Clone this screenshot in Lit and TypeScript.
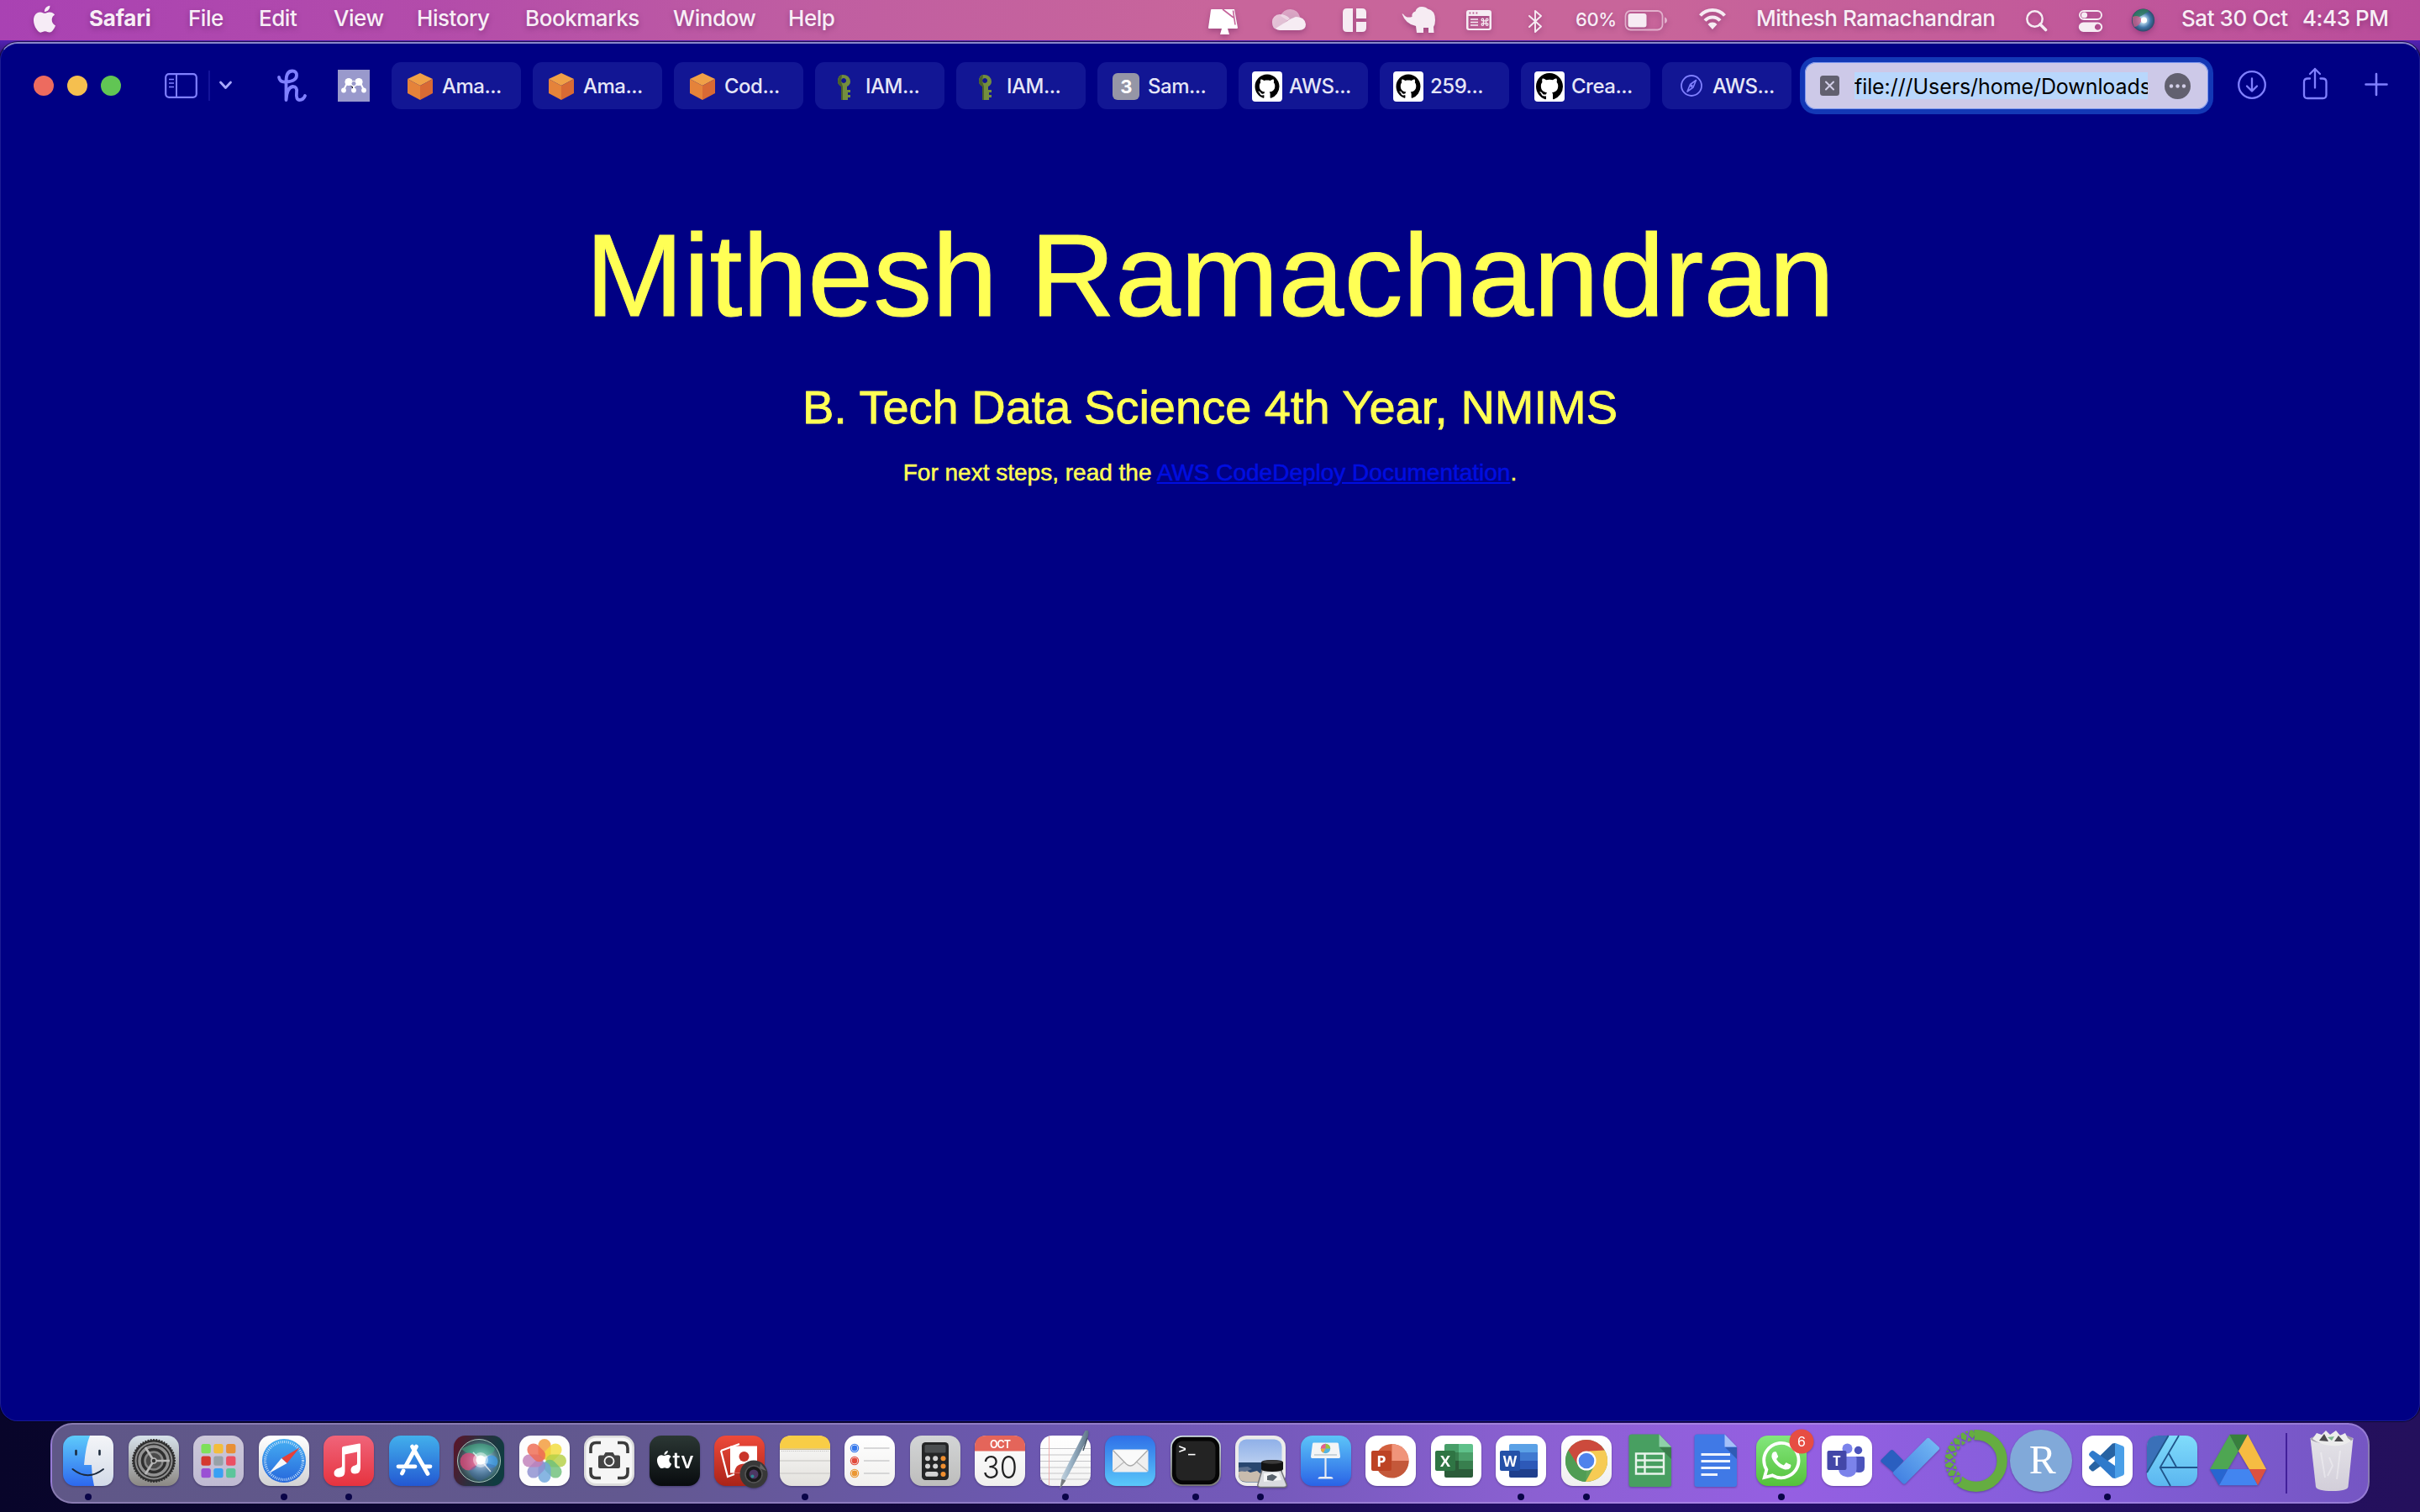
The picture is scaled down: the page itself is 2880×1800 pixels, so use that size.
import { LitElement, html, svg, css } from "lit";
import { customElement } from "lit/decorators.js";

const APPLE =
  "M12.152 6.896c-.948 0-2.415-1.078-3.96-1.04-2.04.027-3.91 1.183-4.961 3.014-2.117 3.675-.546 9.103 1.519 12.09 1.013 1.454 2.208 3.09 3.792 3.039 1.52-.065 2.09-.987 3.935-.987 1.831 0 2.35.987 3.96.948 1.637-.026 2.676-1.48 3.676-2.948 1.156-1.688 1.636-3.325 1.662-3.415-.039-.013-3.182-1.221-3.22-4.857-.026-3.04 2.48-4.494 2.597-4.559-1.429-2.09-3.623-2.324-4.39-2.376-2-.156-3.675 1.09-4.61 1.09zM15.53 3.83c.843-1.012 1.4-2.427 1.245-3.83-1.207.052-2.662.805-3.532 1.818-.78.896-1.454 2.338-1.273 3.714 1.338.104 2.715-.688 3.559-1.701";
const OCTOCAT =
  "M8 0C3.58 0 0 3.58 0 8c0 3.54 2.29 6.53 5.47 7.59.4.07.55-.17.55-.38 0-.19-.01-.82-.01-1.49-2.01.37-2.53-.49-2.69-.94-.09-.23-.48-.94-.82-1.13-.28-.15-.68-.52-.01-.53.63-.01 1.08.58 1.23.82.72 1.21 1.87.87 2.33.66.07-.52.28-.87.51-1.07-1.78-.2-3.64-.89-3.64-3.95 0-.87.31-1.59.82-2.15-.08-.2-.36-1.02.08-2.12 0 0 .67-.21 2.2.82.64-.18 1.32-.27 2-.27.68 0 1.36.09 2 .27 1.53-1.04 2.2-.82 2.2-.82.44 1.1.16 1.92.08 2.12.51.56.82 1.27.82 2.15 0 3.07-1.87 3.75-3.65 3.95.29.25.54.73.54 1.48 0 1.07-.01 1.93-.01 2.2 0 .21.15.46.55.38A8.013 8.013 0 0016 8c0-4.42-3.58-8-8-8z";
const WHATSAPP =
  "M17.472 14.382c-.297-.149-1.758-.867-2.03-.967-.273-.099-.471-.148-.67.15-.197.297-.767.966-.94 1.164-.173.199-.347.223-.644.075-.297-.15-1.255-.463-2.39-1.475-.883-.788-1.48-1.761-1.653-2.059-.173-.297-.018-.458.13-.606.134-.133.298-.347.446-.52.149-.174.198-.298.298-.497.099-.198.05-.371-.025-.52-.075-.149-.669-1.612-.916-2.207-.242-.579-.487-.5-.669-.51-.173-.008-.371-.01-.57-.01-.198 0-.52.074-.792.372-.272.297-1.04 1.016-1.04 2.479 0 1.462 1.065 2.875 1.213 3.074.149.198 2.096 3.2 5.077 4.487.709.306 1.262.489 1.694.625.712.227 1.36.195 1.871.118.571-.085 1.758-.719 2.006-1.413.248-.694.248-1.289.173-1.413-.074-.124-.272-.198-.57-.347m-5.421 7.403h-.004a9.87 9.87 0 01-5.031-1.378l-.361-.214-3.741.982.998-3.648-.235-.374a9.86 9.86 0 01-1.51-5.26c.001-5.45 4.436-9.884 9.888-9.884 2.64 0 5.122 1.03 6.988 2.898a9.825 9.825 0 012.893 6.994c-.003 5.45-4.437 9.884-9.885 9.884m8.413-18.297A11.815 11.815 0 0012.05 0C5.495 0 .16 5.335.157 11.892c0 2.096.547 4.142 1.588 5.945L.057 24l6.305-1.654a11.882 11.882 0 005.683 1.448h.005c6.554 0 11.89-5.335 11.893-11.893a11.821 11.821 0 00-3.48-8.413z";

const fade = (id: string, from: string, to: string) => svg`
  <linearGradient id=${id} x1="0" y1="0" x2="0" y2="1">
    <stop offset="0" stop-color=${from} /><stop offset="1" stop-color=${to} />
  </linearGradient>`;

const tile = (id: string, from: string, to: string) => svg`
  ${fade(id, from, to)}
  <rect width="60" height="60" rx="14" fill="url(#${id})" />`;

const range = (n: number) => Array.from({ length: n }, (_, i) => i);

/* ---------- menu bar glyphs ---------- */
const menuGlyphs = {
  cleaner: svg`<path d="M6 11h27l4 22q0 1-1 1H3q-1 0-1-1l3-21q0-1 1-1z" fill="#fff"/><path d="M18 34h7l2 7H16z" fill="#fff"/><path d="M19 11l13 10M31.500 12.500l2.500 17" stroke="#c4639a" stroke-width="1.600" fill="none"/>`,
  cloud: svg`<path d="M12 19a12 12 0 0 1 23 1L23 26z" fill="#f6ecf3" opacity=".5"/><path d="M2 27a9 9 0 0 1 9-10q7 0 12 5l-15 13q-6-1-6-8z" fill="#f6ecf3" opacity=".72"/><path d="M6 34l17-11 7-3q11 0 12 9 0 7-8 7H11q-3 0-5-2z" fill="#f6ecf3"/>`,
  panes: svg`<path d="M7 10h7v28H7q-5 0-5-5V15q0-5 5-5zM18 10h7q5 0 5 5v7H18zM18 26h12v7q0 5-5 5h-7z" fill="#f6ecf3"/>`,
  elephant: svg`<path d="M1.500 16.500q1.500-.5 2 1 3 4.500 10 2.500-1-5 4-6.500Q19 8 25 8q5 0 7 2.500Q41 12 41 24q0 5-2 8l.5 7H33v-6h-6v6h-8l-1-8Q6 29 1.500 16.500z" fill="#f6ecf3"/>`,
  commands: svg`<path fill-rule="evenodd" d="M4 12h24q3 0 3 3v18q0 3-3 3H4q-3 0-3-3V15q0-3 3-3zM3.500 19v14q0 1 1 1h23q1 0 1-1V19z" fill="#f6ecf3"/><path d="M4.500 15.500h1.800M8.500 15.500h1.800M12.500 15.500h1.800" stroke="#b85b90" stroke-width="1.800"/><path d="M6 23h9M6 26.500h9M6 30h9" stroke="#f6ecf3" stroke-width="1.500"/><path d="M21 24.800h4M21 27.800h4M21.500 24v5M24.500 24v5" stroke="#f6ecf3" stroke-width="1.200"/><g fill="none" stroke="#f6ecf3" stroke-width="1.200"><circle cx="20.400" cy="23.500" r="1.300"/><circle cx="25.700" cy="23.500" r="1.300"/><circle cx="20.400" cy="29" r="1.300"/><circle cx="25.700" cy="29" r="1.300"/></g>`,
  bluetooth: svg`<path d="M2 19l14 12.500-7 6.500V13l7 6L2 32" fill="none" stroke="#f6ecf3" stroke-width="1.900" stroke-linejoin="round" stroke-linecap="round"/>`,
  battery: svg`<rect x="2.500" y="13" width="44" height="22.500" rx="6" fill="none" stroke="#e2b0cc" stroke-width="1.800"/><rect x="5.500" y="16" width="22" height="16.500" rx="3" fill="#f6ecf3"/><path d="M49 20.500q3 1 3 3.700t-3 3.700z" fill="#e2b0cc"/>`,
  wifi: svg`<g fill="none" stroke="#f6ecf3" stroke-width="4"><path d="M3.500 18.500a19.500 19.500 0 0 1 29 0"/><path d="M9 24.500a12 12 0 0 1 18 0"/></g><path d="M12.500 29a7.500 7.500 0 0 1 11 0L18 35z" fill="#f6ecf3"/>`,
  search: svg`<circle cx="11.500" cy="22.500" r="9.200" fill="none" stroke="#f6ecf3" stroke-width="2.500"/><path d="M18 29l6.500 6.500" stroke="#f6ecf3" stroke-width="3.600" stroke-linecap="round"/>`,
  controls: svg`<rect x="2" y="13" width="26" height="10" rx="5" fill="none" stroke="#f6ecf3" stroke-width="1.900"/><circle cx="7.500" cy="18" r="3.600" fill="#f6ecf3"/><path fill-rule="evenodd" d="M6.500 26.500h17a5.700 5.700 0 0 1 0 11.400h-17a5.700 5.700 0 0 1 0-11.400zM23.500 28.600a3.600 3.600 0 1 0 .1 0z" fill="#f6ecf3"/>`,
  siri: svg`<radialGradient id="ms"><stop offset="0" stop-color="#fff"/><stop offset=".3" stop-color="#a9cde6"/><stop offset=".65" stop-color="#4174a8"/><stop offset="1" stop-color="#2b4a68"/></radialGradient><circle cx="14.500" cy="24" r="13.600" fill="url(#ms)"/><path d="M2 21a13 13 0 0 1 20-8l-8 5q-4 3-12 3z" fill="#2f7a5c" opacity=".8"/><path d="M2 20q8-3 11 4-4 8-9 8-3-5-2-12z" fill="#d05a85" opacity=".75"/><circle cx="15.500" cy="24" r="3.600" fill="#fff"/>`,
};

const glyph = (body: unknown, width: number) =>
  html`<svg class="glyph" width=${width} height="48" viewBox="0 0 ${width} 48">${body}</svg>`;

/* ---------- tab icons ---------- */
const cube = html`<svg width="32" height="32" viewBox="0 0 32 32"><path d="M16 0l15 7-15 8L1 7z" fill="#f0a047"/><path d="M1 7l15 8v17L1 24z" fill="#e5833a"/><path d="M31 7l-15 8v17l15-8z" fill="#d96a34"/></svg>`;
const key = html`<svg width="32" height="32" viewBox="0 0 32 32"><path fill-rule="evenodd" d="M15 2q8 0 9 8 0 4-4 6v4h4v3h-3v3h3v3h-3v3h-7V16q-5-2-5-6 0-8 6-8zM16 6a3 3 0 1 0 .1 0z" fill="#738e3f"/><path d="M9 10q0-6 5-8l-1 8 2 6v16h-2V16q-4-2-4-6z" fill="#4b622c"/></svg>`;
const three = html`<svg width="32" height="32" viewBox="0 0 32 32"><rect width="32" height="32" rx="6" fill="#9596a6"/><text x="16" y="24" text-anchor="middle" font-size="22" font-weight="700" fill="#fff">3</text></svg>`;
const octocat = (size: number) => {
  const k = size / 16;
  const o = 18 - size / 2;
  return html`<svg width="36" height="36" viewBox="0 0 36 36"><rect width="36" height="36" rx="4" fill="#fff"/><path transform="translate(${o} ${o}) scale(${k})" d=${OCTOCAT} fill="#000"/></svg>`;
};
const compass = html`<svg width="28" height="28" viewBox="0 0 28 28"><circle cx="15" cy="13" r="12" fill="none" stroke="#8080ff" stroke-width="1.800"/><path d="M20.500 6.500L17 15l-7 5 3.500-8.500z" fill="none" stroke="#8080ff" stroke-width="1.600" stroke-linejoin="round"/><circle cx="15" cy="13.200" r="1.700" fill="#8080ff"/></svg>`;

const tabs: [unknown, string][] = [
  [cube, "Ama..."],
  [cube, "Ama..."],
  [cube, "Cod..."],
  [key, "IAM..."],
  [key, "IAM..."],
  [three, "Sam..."],
  [octocat(29), "AWS..."],
  [octocat(29), "259..."],
  [octocat(32), "Crea..."],
  [compass, "AWS..."],
];

/* ---------- dock icons, drawn on a 60 x 60 tile ---------- */
const gearTeeth = range(48).map(
  (i) => svg`<path transform="rotate(${i * 7.5} 30 30)" d="M30 4v3" stroke="#2d2d2d" stroke-width="1.800"/>`
);
const petals = ["#f29a38", "#f2dc3c", "#b5d045", "#6fbf7a", "#6ea6dc", "#8c8fd0", "#c07fb8", "#ee6a50"].map(
  (c, i) => svg`<rect transform="rotate(${i * 45} 30 30)" x="22.500" y="4" width="15" height="24.500" rx="7.500" fill=${c} opacity=".82"/>`
);
const padColors = [["#7fe05a", "#f3bd3d", "#e88f36"], ["#d5382f", "#97a1a8", "#ec4f63"], ["#9a4fd4", "#39a0f4", "#5cc59b"]];

const latticeCuts = range(9).map((i) => {
  const a = ((126 + i * 18) * Math.PI) / 180;
  const at = (r: number, t: number) => `${(28.7 + r * Math.cos(t)).toFixed(2)} ${(30 + r * Math.sin(t)).toFixed(2)}`;
  return svg`<path d="M${at(40, a - 0.12)}L${at(20, a + 0.4)}M${at(40, a + 0.12)}L${at(20, a - 0.4)}" stroke="#000" stroke-width="2"/>`;
});

const dockIcons: { art: unknown; running?: boolean }[] = [
  {
    running: true,
    art: svg`${tile("fi", "#5ecbfb", "#2d68ee")}${fade("fj", "#f4f5f8", "#d3dbe8")}
      <path d="M32 0h14q14 0 14 14v32q0 14-14 14h-9q-3-12-3-25h-9q2-23 7-35z" fill="url(#fj)"/>
      <path d="M15.500 18v4.500M43.500 18v4.500" stroke="#1c2a3c" stroke-width="2.600" stroke-linecap="round"/>
      <path d="M11.500 40q18 14.500 36.500 0" fill="none" stroke="#1c2a3c" stroke-width="2" stroke-linecap="round"/>`,
  },
  {
    art: svg`${tile("se", "#d7e2ea", "#8b8884")}<circle cx="30" cy="30" r="25" fill="#333"/><circle cx="30" cy="30" r="22.500" fill="#8d8d8d"/>${gearTeeth}
      <circle cx="30" cy="30" r="20.500" fill="#2f2f2f"/><circle cx="30" cy="30" r="17" fill="none" stroke="#929292" stroke-width="3.500"/>
      <circle cx="30" cy="30" r="10.500" fill="#4a4a4a" stroke="#868686" stroke-width="2.500"/>
      <path d="M30 30h19M30 30l-10-16M30 30l-10 16" stroke="#b9b9b9" stroke-width="2.600"/><circle cx="30" cy="30" r="3" fill="#333" stroke="#b9b9b9" stroke-width="1.500"/>`,
  },
  {
    art: svg`${tile("la", "#cdc8da", "#bfbad2")}${padColors.map((row, y) =>
      row.map((c, x) => svg`<rect x=${9.5 + x * 14.8} y=${10 + y * 14.5} width="11.300" height="11.300" rx="2.500" fill=${c}/>`)
    )}`,
  },
  {
    running: true,
    art: svg`${tile("sa", "#ffffff", "#d2d2d4")}${fade("sb", "#45aef2", "#2768dc")}<circle cx="30" cy="30" r="26" fill="url(#sb)"/>
      <circle cx="30" cy="30" r="22.500" fill="none" stroke="#cfe6fa" stroke-width="3.200" stroke-dasharray=".9 1.500"/>
      <path d="M48.500 14.500L33.500 33 27 27z" fill="#e6403a"/><path d="M12 45L27 27l6.500 6z" fill="#f6f7f9"/>`,
  },
  {
    running: true,
    art: svg`${tile("mu", "#f0647a", "#e6333f")}<path d="M22 15q0-1.500 1.500-2L42.500 9.500q1.500-.3 1.500 1V38q0 7.500-6.500 7.500-5 0-5-4.500 0-4.300 5-5.500 2.500-.5 2.500-2.500V19.500L25.500 22.500V42.500q0 7-7 7-6 0-6-4.800 0-4.700 6-6 3.500-.7 3.500-2.700z" fill="#fff"/>`,
  },
  {
    art: svg`${tile("as", "#42b0ec", "#2358d2")}<g stroke="#fff" stroke-width="4.800" stroke-linecap="round"><path d="M32.500 13L20 36"/><path d="M27.500 13l18.500 32.500"/><path d="M11 36.800h20M42 36.800h7"/><path d="M17 42l-1.500 3"/></g>`,
  },
  {
    art: svg`<linearGradient id="si" x1="0" x2="1" y2=".3"><stop offset="0" stop-color="#5e1226"/><stop offset=".5" stop-color="#2d2e3e"/><stop offset="1" stop-color="#0f3c40"/></linearGradient><rect width="60" height="60" rx="14" fill="url(#si)"/>
      <radialGradient id="sj" cx=".55" cy=".5"><stop offset="0" stop-color="#fff"/><stop offset=".2" stop-color="#e3f2fb"/><stop offset=".5" stop-color="#7fa9b8"/><stop offset="1" stop-color="#386c6c" stop-opacity=".5"/></radialGradient>
      <circle cx="30" cy="30" r="25.500" fill="url(#sj)" stroke="#a9c6bd" stroke-width="1"/>
      <path d="M9 16q20-12 39-2 4 6-14 12-16-2-25-10z" fill="#3fae81" opacity=".55"/><circle cx="18" cy="31" r="10.500" fill="#e8467a" opacity=".72"/><circle cx="45" cy="31" r="7.500" fill="#3f9be8" opacity=".75"/><path d="M18 42q12-14 32-6-4 12-18 18-10-2-14-12z" fill="#3a5fa0" opacity=".4"/>
      <circle cx="32" cy="29" r="9" fill="#fff" opacity=".45"/><circle cx="32" cy="29" r="5.500" fill="#fff"/><path d="M32 29L23 20M32 29l12 14" stroke="#fff" stroke-width="1.500" opacity=".7"/>`,
  },
  { art: svg`<rect width="60" height="60" rx="14" fill="#fdfdfd"/>${petals}` },
  {
    art: svg`<rect width="60" height="60" rx="14" fill="#dcdcdc"/><rect x="2.500" y="2.500" width="55" height="54.500" rx="12" fill="#f6f6f6"/>
      <g fill="none" stroke="#3c3c3c" stroke-width="3.600"><path d="M8 21v-6q0-6.500 6.500-6.500H20M40 8.500h5.500Q52 8.500 52 15v6M52 38v6q0 6.500-6.500 6.500H40M20 50.500h-5.500Q8 50.500 8 44v-6"/></g>
      <path d="M19 23.500h4.500l2-3.500h9l2 3.500H41q2 0 2 2V37q0 2-2 2H19q-2 0-2-2V25.500q0-2 2-2z" fill="#444"/><circle cx="30" cy="30.500" r="5.500" fill="#444" stroke="#f6f6f6" stroke-width="1.800"/>`,
  },
  {
    art: svg`${tile("tv", "#2b3734", "#080b0e")}<path transform="translate(7 18) scale(.88)" d=${APPLE} fill="#fff"/><text x="27.500" y="38.500" font-size="26" font-weight="500" textLength="25" lengthAdjust="spacingAndGlyphs" fill="#fff">tv</text>`,
  },
  {
    art: svg`${tile("pb", "#ee4a3a", "#aa2318")}<path d="M8 18l22-8M8 18l8 31 8-3" fill="none" stroke="#fff" stroke-width="2.200"/><rect x="19" y="12.500" width="32" height="32" fill="#fff"/><circle cx="35.500" cy="25" r="6" fill="#c9352a"/><path d="M24 44.500q1-11 12-11 8 0 10 4l-6 7z" fill="#c9352a"/>
      <circle cx="47" cy="46" r="16.500" fill="#383838"/><circle cx="47" cy="46" r="10" fill="#191919" stroke="#555" stroke-width="1.500"/><circle cx="47" cy="46" r="5.500" fill="#4c3763"/><circle cx="45.500" cy="48.500" r="2" fill="#2d8b94"/><path d="M55 33l7 9-8-3z" fill="#666"/>`,
  },
  {
    running: true,
    art: svg`${tile("no", "#fafaf9", "#e3e1dd")}<path d="M0 15.500V14Q0 0 14 0h32q14 0 14 14v1.500z" fill="#f8cd46"/><path d="M0 16.200h60" stroke="#bda255" stroke-width="1"/><path d="M2 18.500h56" stroke="#bdbdbd" stroke-width="1" stroke-dasharray="1 1.300"/><path d="M0 30h60M0 45h60" stroke="#d2d1ce" stroke-width="1.300"/>`,
  },
  {
    art: svg`${tile("re", "#ffffff", "#f1f0ee")}${["#3478ec", "#e24a3b", "#ea9733"].map(
      (c, i) => svg`<circle cx="12" cy=${15 + i * 15} r="4.700" fill="none" stroke=${c} stroke-width="1.100"/><circle cx="12" cy=${15 + i * 15} r="3.400" fill=${c}/><path d="M23 ${15 + i * 15}h30.500" stroke="#c9c9cb" stroke-width="1.400"/>`
    )}`,
  },
  {
    art: svg`${tile("ca", "#d3d5d6", "#bdbdbc")}<rect x="14" y="8" width="32" height="45" rx="4.500" fill="#242526"/><rect x="17.500" y="11" width="25" height="9.500" rx="1.500" fill="#4b4e50"/>
      ${range(2).map((r) => range(2).map((c) => svg`<circle cx=${21 + c * 9.2} cy=${27.3 + r * 9.3} r="3" fill="#d3d3d3"/>`))}
      ${range(3).map((r) => svg`<circle cx="39.500" cy=${27.3 + r * 9.3} r="3" fill="#f08f2f"/>`)}<rect x="18" y="43" width="15.500" height="5.800" rx="2.900" fill="#d3d3d3"/>`,
  },
  {
    art: svg`${tile("cl", "#ffffff", "#f0efee")}<path d="M0 18.500V14Q0 0 14 0h32q14 0 14 14v4.500z" fill="#e4655a"/><text x="30.500" y="14.500" text-anchor="middle" font-size="12.500" font-weight="600" textLength="25" fill="#fff">OCT</text><text x="30" y="50.500" text-anchor="middle" font-size="36.500" font-weight="300" textLength="42" lengthAdjust="spacingAndGlyphs" fill="#222">30</text>`,
  },
  {
    running: true,
    art: svg`${tile("te", "#ffffff", "#f3f3f3")}<path d="M0 15.500h60M0 23h60M0 30.500h60M0 38h60M0 45h60M0 52h60" stroke="#c5c5c8" stroke-width="1.200"/><path d="M10.500 1v58" stroke="#eda7a7" stroke-width=".9"/>
      <linearGradient id="tp" x1="0" x2="1" y2=".3"><stop offset="0" stop-color="#eef3f6"/><stop offset=".5" stop-color="#9db5c8"/><stop offset="1" stop-color="#52687a"/></linearGradient>
      <path d="M51-1l2.500-5h3.500l.5 4-1.500 6L33 48l-9.500 15 2-14z" fill="url(#tp)"/><path d="M23.300 63.500l2.200-12 5 2z" fill="#777c80"/><path d="M56 3L51 18" stroke="#465868" stroke-width="1.500"/>`,
  },
  {
    art: svg`${tile("ma", "#2f6fe8", "#5ac8fa")}<rect x="9" y="16.500" width="42.500" height="27" rx="2.500" fill="#efefef"/><path d="M9.500 42.500L24.500 30M51 42.500L36 30" stroke="#b9b9b9" stroke-width="1.200"/><path d="M9.500 17.500l16 16.500q4.700 4 9.400 0l16-16.500" fill="#fafafa" stroke="#aaa" stroke-width="1.300"/>`,
  },
  {
    running: true,
    art: svg`${tile("tm", "#d5e2e8", "#7b7a78")}<rect x="1.800" y="1.800" width="56.400" height="56.400" rx="12.500" fill="#050505"/><rect x="6.500" y="6.500" width="47" height="47" rx="8" fill="#232323"/><text x="9.500" y="20.500" font-family="Liberation Mono" font-weight="700" font-size="15.500" fill="#fff">&gt;</text><path d="M21 22.600h8.500" stroke="#fff" stroke-width="1.600"/>`,
  },
  {
    running: true,
    art: svg`<rect width="60" height="60" rx="14" fill="#ecebea"/>${fade("pr", "#8fb0e8", "#d9e5f5")}<rect x="4" y="4.500" width="51.500" height="51" rx="9" fill="url(#pr)"/><path d="M4 32h51.500v14q0 9.500-9.500 9.500H13q-9 0-9-9.500z" fill="#28466f"/><path d="M4 43l8-2 6 3 8-2 6 5-4 8H13q-9 0-9-9z" fill="#c8bcae"/><path d="M4 38l11-1 5 3-8 3-8-1z" fill="#5b6f8e"/>
      <path d="M32 41l22-1 7 18q1 3-3 3.500H30q-4-.5-3-3.500z" fill="#d9dbdf" stroke="#737378" stroke-width="1.500"/><path d="M34 45l18-1 3 9-21 2z" fill="#f4f5f6"/><path d="M38 48l6-2 6 3-5 5-7-1z" fill="#59636d"/><path d="M31 32q0-3 13-3t13 3v8q-1 3-13 3t-13-3z" fill="#121212"/><ellipse cx="44" cy="31.500" rx="12" ry="2.200" fill="#3a3a3a"/>`,
  },
  {
    art: svg`${tile("ke", "#5cc5f8", "#2a63e6")}<path d="M15 8.500h28.500q1.500 0 1.500 1.500l2 15q0 2-1.500 2H13.500q-1.500 0-1.500-2l2-15q0-1.500 1-1.500z" fill="#f4f5f6"/><path d="M16 23h27" stroke="#9fb3bd" stroke-width="1"/><circle cx="29.500" cy="15.500" r="5.700" fill="#54b5e0"/><path d="M29.500 15.500V9.800a5.700 5.700 0 0 1 5.700 5.700z" fill="#9bc53d"/><path d="M29.500 15.500v-5.700a5.700 5.700 0 0 0-5.700 5.700z" fill="#e85f8b"/><path d="M29.500 15.500h-5.700a5.700 5.700 0 0 0 3 5z" fill="#f0a63c"/><path d="M29.500 27v22" stroke="#e9edf2" stroke-width="2.200"/><path d="M20.500 51.500q0-2.500 3-2.500h12q3 0 3 2.500z" fill="#eceff3"/>`,
  },
  {
    art: svg`<rect width="60" height="60" rx="14" fill="#fff"/><circle cx="31.500" cy="30" r="20" fill="#d2603e"/><path d="M31.500 10a20 20 0 0 1 20 20h-20z" fill="#f0947a"/><path d="M51.500 30a20 20 0 0 1-37 11L31.500 30z" fill="#c4583a"/><rect x="7" y="18" width="24" height="24" rx="2" fill="#bd4324"/><text x="19" y="36.500" text-anchor="middle" font-family="Open Sans" font-size="18" font-weight="700" fill="#fff">P</text>`,
  },
  {
    art: svg`<rect width="60" height="60" rx="14" fill="#fff"/><path d="M16 12q0-2 2-2h15v10H16z" fill="#479e68"/><path d="M33 10h15q2 0 2 2v8H33z" fill="#5fc18a"/><path d="M16 20h17v10H16z" fill="#387f4e"/><path d="M33 20h17v10H33z" fill="#4a9f69"/><path d="M16 30h17v10H16z" fill="#2b5c39"/><path d="M33 30h17v10H33z" fill="#387f4e"/><path d="M16 40h34v8q0 2-2 2H18q-2 0-2-2z" fill="#2b5c39"/><rect x="5" y="18" width="24" height="24" rx="2" fill="#2f7544"/><text x="17" y="36.500" text-anchor="middle" font-family="Open Sans" font-size="18" font-weight="700" fill="#fff">X</text>`,
  },
  {
    running: true,
    art: svg`<rect width="60" height="60" rx="14" fill="#fff"/><path d="M16 12q0-2 2-2h30q2 0 2 2v8H16z" fill="#5ba1e6"/><path d="M16 20h34v10H16z" fill="#4079d0"/><path d="M16 30h34v10H16z" fill="#2d59b8"/><path d="M16 40h34v8q0 2-2 2H18q-2 0-2-2z" fill="#1f3f8c"/><rect x="5" y="18" width="24" height="24" rx="2" fill="#2451a8"/><text x="17" y="36.500" text-anchor="middle" font-family="Open Sans" font-size="17" font-weight="700" fill="#fff">W</text>`,
  },
  {
    running: true,
    art: svg`${tile("ch", "#ffffff", "#efefef")}<circle cx="30" cy="30" r="25" fill="#5fa55a"/><path d="M8.300 17.500A25 25 0 0 1 51.700 17.500L30 20 20 36z" fill="#cc4a3c"/><path d="M51.700 17.500A25 25 0 0 1 29 55l10.500-19Q43 27 33 18.500z" fill="#f6cb54"/><path d="M8.300 17.500L20.500 37 30 42 29 55A25 25 0 0 1 8.300 17.500z" fill="#509d54"/><circle cx="30" cy="30" r="11.500" fill="#fff"/><circle cx="30" cy="30" r="9.300" fill="#4f83ec"/>`,
  },
  {
    art: svg`<path d="M7-1.500h32.500L54 13.500V58q0 3-3 3H6.500q-3 0-3-3V1.500q0-3 3.500-3z" fill="#489f61"/><path d="M39.500-1.500L54 13.500H39.500z" fill="#8fd0a9"/><path d="M40 14h14v14z" fill="#3a7d4c"/><path d="M12 21.500h33v24H12zM12 29.500h33M12 37.500h33M22.500 21.500v24" fill="none" stroke="#e9f4ec" stroke-width="2.400"/>`,
  },
  {
    art: svg`<path d="M7-1.500h32.500L54 13.500V58q0 3-3 3H6.500q-3 0-3-3V1.500q0-3 3.500-3z" fill="#4079e6"/><path d="M39.500-1.500L54 13.500H39.500z" fill="#a5c0f8"/><path d="M40 14h14v14z" fill="#2f5cb5"/><path d="M11.500 22.500h34.500M11.500 30.500h34.500M11.500 38.500h34.500M11.500 46.500h19.500" stroke="#eef3fd" stroke-width="3"/>`,
  },
  {
    running: true,
    art: svg`${tile("wa", "#83e77d", "#55c13b")}<path transform="translate(7 7) scale(1.900)" d=${WHATSAPP} fill="#fff"/><circle cx="54" cy="7" r="14.500" fill="#e64d43"/><text x="54" y="13" text-anchor="middle" font-size="16" fill="#fff">6</text>`,
  },
  {
    art: svg`<rect width="60" height="60" rx="14" fill="#fff"/><circle cx="43.500" cy="17.500" r="4.700" fill="#4b53bc"/><path d="M35 25h14q2 0 2 2v11q0 6-7 6-9 0-9-7z" fill="#4b53bc"/><circle cx="30.500" cy="15.500" r="6" fill="#7b83eb"/><path d="M20 25h20q1.500 0 1.500 1.500V39q0 10-11 10.500Q20 48.500 20 39z" fill="#7b83eb"/><rect x="6.500" y="18" width="23" height="23" rx="2" fill="#4347a8"/><text x="18" y="35.500" text-anchor="middle" font-family="Open Sans" font-size="16" font-weight="700" fill="#fff">T</text>`,
  },
  {
    art: svg`<linearGradient id="td" x1="0" y1="1" x2="1" y2="0"><stop offset="0" stop-color="#3d7be0"/><stop offset="1" stop-color="#77bdf5"/></linearGradient><path d="M8 17.500L20.500 30 8.500 44-6 31.500q-1.500-1.500 0-3L5 17.500q1.500-1.200 3 0z" fill="#2a5fc0"/><path d="M48 3.500q1.700-1.400 3.300 0l11 10q1.500 1.700 0 3.500L22.800 57q-1.800 1.500-3.500 0L8.500 46q-1-1.500 0-3z" fill="url(#td)"/>`,
  },
  {
    art: svg`<mask id="am" maskUnits="userSpaceOnUse" x="-12" y="-10" width="82" height="82"><rect x="-12" y="-10" width="82" height="82" fill="#fff"/>${latticeCuts}<circle cx="28.700" cy="30" r="31.500" fill="none" stroke="#fff" stroke-width="14" stroke-dasharray="121 200" transform="rotate(-94 28.700 30)"/></mask>
      <circle cx="28.700" cy="30" r="30.900" fill="none" stroke="#65ad41" stroke-width="12.300" mask="url(#am)"/>`,
  },
  {
    art: svg`<circle cx="29" cy="30" r="37" fill="#81a9d9"/><text x="30.700" y="44.500" text-anchor="middle" font-family="Liberation Serif" font-size="48" fill="#fff">R</text>`,
  },
  {
    running: true,
    art: svg`<rect width="60" height="60" rx="14" fill="#fff"/><path d="M39 9v15L14 42q-1.500 1-3 0l-2.500-2.500q-1-1.500 0-3L36 9.500z" fill="#2763a3"/><path d="M39 51V36L14 18.500q-1.500-1-3 0L8.500 21q-1 1.500 0 3L36 50.500z" fill="#2f7acb"/><path d="M39 8.700l9.500 3.800q1.500.8 1.500 2.500v30q0 1.700-1.500 2.500L39 51.200z" fill="#4a9fe8"/>`,
  },
  {
    art: svg`${tile("af", "#80dcfb", "#5bb6f0")}<path d="M14 0h11.700L0 44V14Q0 0 14 0z" fill="#3a70b8"/><path d="M38 0L15.700 38 28 60M15.700 38H60M25.700 20.700L35 37.500M25.700 0L0 44" fill="none" stroke="#20558b" stroke-width="1.800"/>`,
  },
  {
    art: svg`<path d="M20.500-1.300L31 18.500 18.500 40H-3z" fill="#4ea652"/><path d="M20.500-1.300H42L31 18.500z" fill="#37803d"/><path d="M42-1.300L64 40H43.700L31 18.500z" fill="#f6bc42"/><path d="M-3 40h21.500L8 59.300z" fill="#2766d0"/><path d="M18.500 40h25.200L54 59.300H8z" fill="#4285f0"/><path d="M43.700 40H64L54 59.300z" fill="#dc5140"/>`,
  },
];

const trash = svg`${fade("tr", "#e9e9ea", "#d6d3da")}<path d="M1.500 5q25-6 51 0l-6 58q-1 5-19 5T8 63z" fill="url(#tr)" opacity=".96"/><ellipse cx="27" cy="6" rx="25" ry="5.500" fill="#9f9aa8"/><path d="M4 6l5-7 6 2 5-5 5 5 7-5 5 6 6-3 3 6 4 3q-9 7-23 6T4 6z" fill="#ececec"/><path d="M12 8l6-8 5 9zM30 9l5-7 6 7z" fill="#4b4a4e"/><path d="M22 4l5 4 3-5z" fill="#7db58e"/><path d="M14 22l5 30M37 20l-4 34M24 28l4 10-6 12" stroke="#fff" stroke-width="2" opacity=".35" fill="none"/>`;

@customElement("app-root")
export class AppRoot extends LitElement {
  static styles = css`
    :host {
      display: block;
      font-family: Inter, "Liberation Sans", sans-serif;
    }
    svg {
      display: block;
      overflow: visible;
      flex: none;
    }
    .desktop {
      width: 2880px;
      height: 1800px;
      overflow: hidden;
      display: flex;
      flex-direction: column;
      background:
        linear-gradient(180deg, #5422b4 0 48px, transparent 90px),
        linear-gradient(40deg, transparent 0 67%, #4a1a9c 67.1%, #2a0f78 90%, #1c0b4c),
        linear-gradient(90deg, #08052a, #12083c 40%, #220e68 66%, #24105c);
    }
    .menubar {
      height: 48px;
      display: flex;
      justify-content: space-between;
      background: linear-gradient(90deg, #a942b3, #b34caa 18%, #c05ea1 34%, #c8659b 50%, #c8659a 68%, #c35b9a 83%, #b94c9b);
      color: #f8eef6;
      font-size: 26px;
      font-weight: 500;
      line-height: 44px;
      letter-spacing: -0.45px;
      text-shadow: 0 3px 6px rgba(70, 10, 70, 0.35);
      white-space: nowrap;
    }
    .menus,
    .extras {
      display: grid;
      align-items: center;
    }
    .menus > span,
    .extras > span {
      height: 48px;
    }
    .menus {
      padding-left: 37px;
      grid-template-columns: 69px 118px 84px 89px 99px 129px 176px 137px 80px;
    }
    .extras {
      grid-template-columns: 76px 84px 71px 77px 74px 57px 57px 88px 70px 320px 63px 63px 60px 144px 140px;
    }
    .menus > .app-name {
      font-weight: 700;
      letter-spacing: -0.2px;
    }
    .extras > .percent {
      font-size: 22px;
      letter-spacing: -0.4px;
      line-height: 47px;
    }
    .glyph {
      filter: drop-shadow(0 3px 3px rgba(70, 10, 70, 0.3));
    }
    .window {
      box-sizing: border-box;
      height: 1642px;
      margin-top: 2px;
      border: 1px solid #1c1c93;
      border-top: 2px solid #8a88cc;
      border-radius: 21px;
      background: #000084;
      box-shadow: 0 0 0 1px rgba(0, 0, 20, 0.6);
    }
    .toolbar {
      height: 100px;
      display: flex;
      align-items: center;
      padding-left: 39px;
    }
    .lights {
      display: flex;
      gap: 16px;
      width: 156px;
    }
    .light {
      width: 24px;
      height: 24px;
      border-radius: 50%;
    }
    .red {
      background: #ed6b5f;
    }
    .amber {
      background: #f5bf4f;
    }
    .green {
      background: #61c554;
    }
    .side {
      width: 52px;
    }
    .divider {
      width: 2px;
      height: 36px;
      background: #14149a;
      margin-right: 11px;
    }
    .chevron {
      width: 69px;
    }
    .honey {
      width: 72px;
    }
    .mendeley {
      width: 64px;
    }
    .tabs {
      display: flex;
      gap: 14px;
    }
    .tab {
      width: 154px;
      height: 56px;
      border-radius: 11px;
      background: #121694;
      display: grid;
      grid-template-columns: 60px 94px;
      align-items: center;
      color: #e6e6f6;
      font-size: 24px;
      font-weight: 500;
      letter-spacing: -0.5px;
      line-height: 58px;
      white-space: nowrap;
    }
    .favicon {
      display: flex;
      justify-content: center;
      padding-left: 8px;
    }
    .address {
      box-sizing: border-box;
      width: 480px;
      height: 56px;
      margin-left: 16px;
      border-radius: 13px;
      background: #cdc9e8;
      box-shadow: inset 0 0 0 1px #7d97ee, 0 0 0 6px #1338b6;
      display: flex;
      align-items: center;
      padding-left: 18px;
    }
    .url {
      width: 349px;
      height: 32px;
      margin: 0 20px 0 18px;
      overflow: hidden;
      background: #b9d7fc;
      color: #000;
      font-size: 25px;
      letter-spacing: -0.08px;
      line-height: 34px;
      white-space: nowrap;
    }
    .actions {
      display: flex;
      align-items: center;
      margin-left: 34px;
    }
    .page {
      display: flex;
      flex-direction: column;
      align-items: center;
      padding-top: 96px;
      color: #ffff55;
      font-family: "Liberation Sans", Arial, sans-serif;
    }
    h1,
    h2,
    p {
      margin: 0;
      font-weight: 400;
      white-space: nowrap;
    }
    h1 {
      font-size: 140px;
      line-height: 160px;
      -webkit-text-stroke: 1px #ffff55;
    }
    h2 {
      font-size: 56px;
      line-height: 64px;
      margin-top: 45px;
      -webkit-text-stroke: 0.8px #ffff55;
    }
    p {
      font-size: 28px;
      line-height: 32px;
      margin-top: 30px;
      -webkit-text-stroke: 0.5px currentColor;
    }
    a {
      color: #000ee0;
      text-decoration: underline;
      -webkit-text-stroke: 0.5px #000ee0;
    }
    .dock {
      box-sizing: border-box;
      width: 2760px;
      height: 96px;
      margin: 2px 0 0 60px;
      border: 2px solid rgba(200, 180, 240, 0.4);
      border-radius: 26px;
      background: linear-gradient(90deg, #5f5787, #625890 25%, #6c58b0 42%, #7459ba 52%, #8b60d2 64%, #955fe2 75%, #855edb 86%, #7556c3);
      background-clip: border-box;
      display: flex;
      padding-left: 4.500px;
    }
    .slot {
      width: 77.500px;
      display: flex;
      flex-direction: column;
      align-items: center;
      padding-top: 13px;
    }
    .slot svg {
      filter: drop-shadow(0 1px 1px rgba(0, 0, 30, 0.3));
    }
    .dot {
      width: 8px;
      height: 8px;
      margin-top: 9px;
      border-radius: 50%;
      background: #0a0548;
    }
    .rule {
      width: 2px;
      height: 72px;
      margin: 10px 26px 0 18px;
      background: #43209a;
    }
  `;

  render() {
    return html`
      <div class="desktop">
        <header class="menubar">
          <nav class="menus">
            <svg class="glyph" width="32" height="32" viewBox="0 0 24 24"><path transform="translate(0 -1)" d=${APPLE} fill="#f6ecf6" /></svg>
            <span class="app-name">Safari</span>
            ${["File", "Edit", "View", "History", "Bookmarks", "Window", "Help"].map((m) => html`<span>${m}</span>`)}
          </nav>
          <div class="extras">
            ${glyph(menuGlyphs.cleaner, 40)} ${glyph(menuGlyphs.cloud, 44)} ${glyph(menuGlyphs.panes, 34)}
            ${glyph(menuGlyphs.elephant, 42)} ${glyph(menuGlyphs.commands, 34)} ${glyph(menuGlyphs.bluetooth, 20)}
            <span class="percent">60%</span>
            ${glyph(menuGlyphs.battery, 54)} ${glyph(menuGlyphs.wifi, 36)}
            <span>Mithesh Ramachandran</span>
            ${glyph(menuGlyphs.search, 28)} ${glyph(menuGlyphs.controls, 30)} ${glyph(menuGlyphs.siri, 30)}
            <span>Sat 30 Oct</span>
            <span>4:43 PM</span>
          </div>
        </header>

        <main class="window">
          <div class="toolbar">
            <div class="lights">
              <span class="light red"></span><span class="light amber"></span><span class="light green"></span>
            </div>
            <div class="side">
              <svg width="40" height="30" viewBox="0 0 40 30" fill="none" stroke="#8080ff">
                <rect x="1.200" y="1.200" width="36.600" height="27.600" rx="4" stroke-width="2.200" />
                <path d="M14 1v28" stroke-width="2" />
                <path d="M5 7.500h6M5 12h6M5 16.500h6" stroke-width="1.500" />
              </svg>
            </div>
            <div class="divider"></div>
            <div class="chevron">
              <svg width="16" height="12" viewBox="0 0 16 12"><path d="M1.500 2l6 6.500 6-6.500" fill="none" stroke="#a9a9ff" stroke-width="2.800" stroke-linecap="round" stroke-linejoin="round" /></svg>
            </div>
            <div class="honey">
              <svg width="36" height="38" viewBox="0 0 36 38" fill="none" stroke="#8080ff" stroke-width="3.800" stroke-linecap="round" stroke-linejoin="round">
                <path d="M2 9q1 6.500 9 5.500 12-1 12-8 0-5-5-5-7.500 0-7.500 12V36q1-15 8-16 5.500 0 4.500 7-1 9 3.500 9t6.500-5" />
              </svg>
            </div>
            <div class="mendeley">
              <svg width="38" height="38" viewBox="0 0 38 38">
                <rect width="38" height="38" fill="#9999cc" />
                <g fill="#fff"><circle cx="13" cy="14.500" r="4.600" /><circle cx="25" cy="14.500" r="4.600" /><circle cx="7" cy="24.500" r="2.900" /><circle cx="19" cy="24.500" r="2.900" /><circle cx="31" cy="24.500" r="2.900" /></g>
                <path d="M7 24l4-8M31 24l-4-8M19 24v-4l-5-3M19 20l5-3" stroke="#fff" stroke-width="2" />
                <circle cx="19" cy="16.500" r="3" fill="#9999cc" stroke="#fff" stroke-width="1" />
              </svg>
            </div>
            <div class="tabs">
              ${tabs.map(([icon, label]) => html`<div class="tab"><span class="favicon">${icon}</span><span>${label}</span></div>`)}
            </div>
            <div class="address">
              <svg width="23" height="24" viewBox="0 0 23 24"><rect width="23" height="24" rx="3.500" fill="#62606f" /><path d="M7 7.500l9 9M16 7.500l-9 9" stroke="#d3cfe8" stroke-width="2" stroke-linecap="round" /></svg>
              <div class="url">file:///Users/home/Downloads</div>
              <svg width="31" height="31" viewBox="0 0 31 31"><circle cx="15.500" cy="15.500" r="15.500" fill="#62606f" /><g fill="#d3cfe8"><circle cx="8" cy="15.500" r="2.200" /><circle cx="15.500" cy="15.500" r="2.200" /><circle cx="23" cy="15.500" r="2.200" /></g></svg>
            </div>
            <div class="actions">
              <svg width="214" height="40" viewBox="0 0 214 40" fill="none" stroke="#8080ff" stroke-width="2.300" stroke-linecap="round" stroke-linejoin="round">
                <circle cx="18" cy="19" r="15.800" /><path d="M18 11.500v14.500M12 20.500l6 6 6-6" />
                <path d="M87 11.500h-2.500q-4.500 0-4.500 4V31q0 4 4 4h18.500q4 0 4-4V15.500q0-4-4.500-4H99.500M93 22.500V0M87 6l6-6 6 6" />
                <path d="M153.500 18.500h25M166 6v25" stroke-width="2.600" />
              </svg>
            </div>
          </div>
          <section class="page">
            <h1>Mithesh Ramachandran</h1>
            <h2>B. Tech Data Science 4th Year, NMIMS</h2>
            <p>For next steps, read the <a>AWS CodeDeploy Documentation</a>.</p>
          </section>
        </main>

        <footer class="dock">
          ${dockIcons.map(
            (d) => html`<div class="slot"><svg width="60" height="60" viewBox="0 0 60 60">${d.art}</svg>${d.running ? html`<span class="dot"></span>` : null}</div>`
          )}
          <div class="rule"></div>
          <svg class="trash" width="54" height="92" viewBox="0 -11 54 92">${trash}</svg>
        </footer>
      </div>
    `;
  }
}
